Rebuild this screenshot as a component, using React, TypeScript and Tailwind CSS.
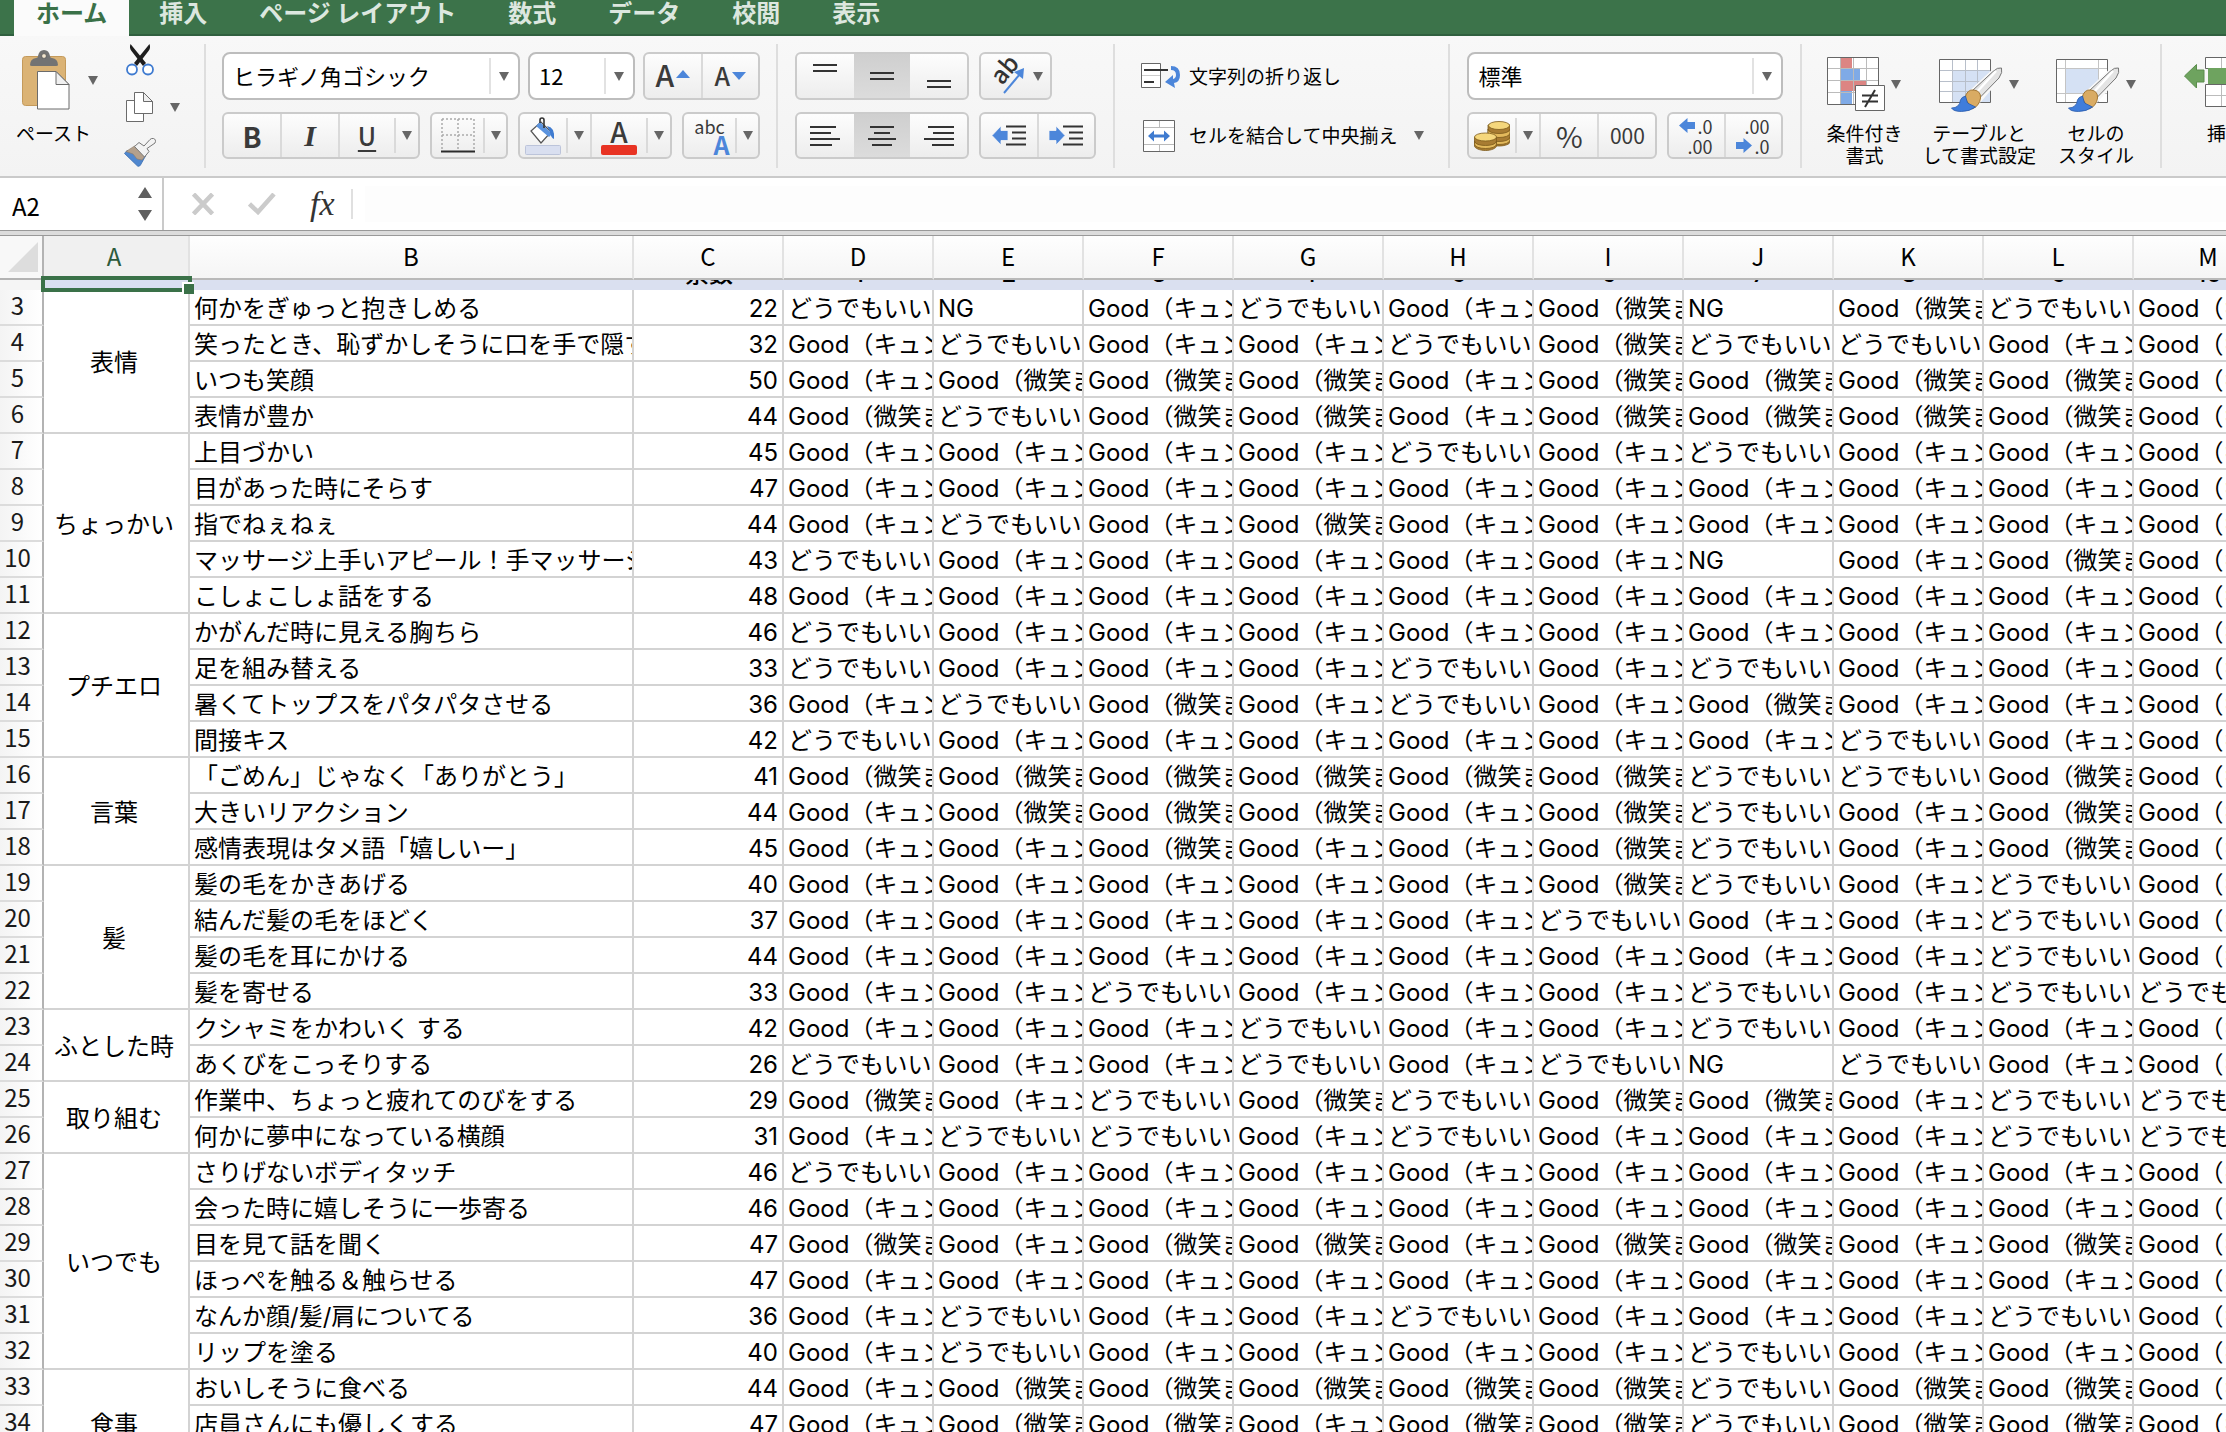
import { useState, type ReactNode } from "react";
import clsx from "clsx";

const TABS = ["ホーム", "挿入", "ページ レイアウト", "数式", "データ", "校閲", "表示"];

const COLUMNS = ["A", "B", "C", "D", "E", "F", "G", "H", "I", "J", "K", "L", "M"];

const ANSWERS: Record<string, string> = {
  K: "Good（キュン",
  B: "Good（微笑ま",
  D: "どうでもいい",
  N: "NG",
};

interface Item {
  label: string;
  votes: number;
  // one letter per answer column, D to M
  answers: string;
}

interface Category {
  name: string;
  items: Item[];
}

const CATEGORIES: Category[] = [
  {
    name: "表情",
    items: [
      { label: "何かをぎゅっと抱きしめる", votes: 22, answers: "DNKDKBNBDK" },
      { label: "笑ったとき、恥ずかしそうに口を手で隠す", votes: 32, answers: "KDKKDBDDKK" },
      { label: "いつも笑顔", votes: 50, answers: "KBBBKBBBBK" },
      { label: "表情が豊か", votes: 44, answers: "BDBBKBBBBK" },
    ],
  },
  {
    name: "ちょっかい",
    items: [
      { label: "上目づかい", votes: 45, answers: "KKKKDKDKKK" },
      { label: "目があった時にそらす", votes: 47, answers: "KKKKKKKKKK" },
      { label: "指でねぇねぇ", votes: 44, answers: "KDKBKKKKKK" },
      { label: "マッサージ上手いアピール！手マッサージ", votes: 43, answers: "DKKKKKNKBK" },
      { label: "こしょこしょ話をする", votes: 48, answers: "KKKKKKKKKK" },
    ],
  },
  {
    name: "プチエロ",
    items: [
      { label: "かがんだ時に見える胸ちら", votes: 46, answers: "DKKKKKKKKK" },
      { label: "足を組み替える", votes: 33, answers: "DKKKDKDKKK" },
      { label: "暑くてトップスをパタパタさせる", votes: 36, answers: "KDBKDKBKKK" },
      { label: "間接キス", votes: 42, answers: "DKKKKKKDKK" },
    ],
  },
  {
    name: "言葉",
    items: [
      { label: "「ごめん」じゃなく「ありがとう」", votes: 41, answers: "BBBBBBDDBK" },
      { label: "大きいリアクション", votes: 44, answers: "KBBBKBDKBK" },
      { label: "感情表現はタメ語「嬉しいー」", votes: 45, answers: "KKBKKBDKBK" },
    ],
  },
  {
    name: "髪",
    items: [
      { label: "髪の毛をかきあげる", votes: 40, answers: "KKKKKBDKDK" },
      { label: "結んだ髪の毛をほどく", votes: 37, answers: "KKKKKDKKDK" },
      { label: "髪の毛を耳にかける", votes: 44, answers: "KKKKKKKKDK" },
      { label: "髪を寄せる", votes: 33, answers: "KKDKKKDKDD" },
    ],
  },
  {
    name: "ふとした時",
    items: [
      { label: "クシャミをかわいく する", votes: 42, answers: "KKKDKKDKKK" },
      { label: "あくびをこっそりする", votes: 26, answers: "DKKDKDNDKK" },
    ],
  },
  {
    name: "取り組む",
    items: [
      { label: "作業中、ちょっと疲れてのびをする", votes: 29, answers: "BKDBDBBKDD" },
      { label: "何かに夢中になっている横顔", votes: 31, answers: "KDDKDKKKDD" },
    ],
  },
  {
    name: "いつでも",
    items: [
      { label: "さりげないボディタッチ", votes: 46, answers: "DKKKKKKKKK" },
      { label: "会った時に嬉しそうに一歩寄る", votes: 46, answers: "KKKKKKKKKK" },
      { label: "目を見て話を聞く", votes: 47, answers: "BKBBKBBKBK" },
      { label: "ほっぺを触る＆触らせる", votes: 47, answers: "KKKKKKKKKK" },
      { label: "なんか顔/髪/肩についてる", votes: 36, answers: "KDKKDKKKDK" },
      { label: "リップを塗る", votes: 40, answers: "KDKKKKDKKK" },
    ],
  },
  {
    name: "食事",
    items: [
      { label: "おいしそうに食べる", votes: 44, answers: "KBBBBBDBBK" },
      { label: "店員さんにも優しくする", votes: 47, answers: "KBBKBBDBBK" },
    ],
  },
];

function Caret({ className }: { className?: string }) {
  return (
    <svg className={clsx("w-[10px] h-[9px] shrink-0", className)} viewBox="0 0 10 9" fill="#666">
      <path d="M0 0h10L5 9z" />
    </svg>
  );
}

function PasteIcon() {
  return (
    <svg className="w-12 h-[60px]" viewBox="0 0 48 60">
      <rect x="0.5" y="6.5" width="43" height="49" rx="3" fill="#dbb375" stroke="#c49a5b" />
      <path d="M8 15q0-6 6-7q2 0 2-2q1-6 6-6t6 6q0 2 2 2q6 1 6 7q0 1-2 1H10q-2 0-2-1z" fill="#737373" />
      <circle cx="22" cy="6" r="2.4" fill="#f3e6cf" stroke="#555" strokeWidth="0.8" />
      <path d="M15.500 21.500H34l13 13v24.500H15.500z" fill="#fff" stroke="#6b6b6b" />
      <path d="M34 21.500v13h13z" fill="#f0f0f0" stroke="#6b6b6b" />
    </svg>
  );
}

function ScissorsIcon() {
  return (
    <svg className="w-7 h-8" viewBox="0 0 28 32">
      <path d="M4.500 0q-1.500 4 1 7l11.500 15 3-3z" fill="#1e1e1e" />
      <path d="M23.500 0q1.500 4-1 7L11 22l-3-3z" fill="#1e1e1e" />
      <circle cx="6" cy="25.500" r="5" fill="#fff" stroke="#3f7bd0" strokeWidth="1.800" />
      <circle cx="22" cy="25.500" r="5" fill="#fff" stroke="#3f7bd0" strokeWidth="1.800" />
    </svg>
  );
}

function CopyIcon() {
  return (
    <svg className="w-7 h-[30px]" viewBox="0 0 28 30" fill="#fff" stroke="#6b6b6b">
      <path d="M0.500 8.500h17v21h-17z" />
      <path d="M8.500 0.500h9l9 9v12h-18z" />
      <path d="M17.500 0.500v9h9z" fill="#efefef" />
    </svg>
  );
}

function FormatBrushIcon() {
  return (
    <svg className="w-8 h-[29px]" viewBox="0 0 32 29">
      <g strokeLinejoin="round">
        <path d="M3 12.500L0.500 15.500l13 12.500q2 1 3-1l5-9z" fill="#4f87cf" stroke="#3a6db0" strokeWidth="0.800" />
        <path d="M10.500 8L2 13.500l7 2.500 4 5 5 1 4-5z" fill="#b3a08c" stroke="#8b7b6a" strokeWidth="0.600" />
        <path d="M15 4.500L10.500 8.500l10 10.500 4.500-5.500-2-3 8-5.500Q32.500 1.500 29.500 0.500q-2-0.500-3.500 1L20 8z" fill="#f3f3f3" stroke="#777" />
      </g>
    </svg>
  );
}

function BordersIcon() {
  return (
    <svg className="w-[34px] h-[35px]" viewBox="0 0 34 35" fill="none">
      <path d="M1 1h32M1 17h32M1 1v30M17 1v30M33 1v30" stroke="#aaa" strokeWidth="1.500" strokeDasharray="2 2" />
      <path d="M0 33.500h34" stroke="#2b2b2b" strokeWidth="2" />
    </svg>
  );
}

function FillIcon() {
  return (
    <svg className="w-9 h-[38px]" viewBox="0 0 36 38" fill="none">
      <path d="M6 14L16 5l10 10-10 11z" fill="#fff" stroke="#555" strokeWidth="1.200" />
      <path d="M11 9l13 11 3-3L15 5z" fill="#5b93de" />
      <path d="M22 9q8 1 7 13q-3-1-4-7z" fill="#3f7bd0" />
      <path d="M19 11V3q0-2-2-2t-2 2v3" stroke="#333" strokeWidth="1.600" />
      <rect x="0.500" y="28.500" width="35" height="9" rx="1" fill="#d9dff0" stroke="#bcc4da" />
    </svg>
  );
}

function WrapIcon() {
  return (
    <svg className="w-10 h-[26px]" viewBox="0 0 40 26" fill="none">
      <path d="M0.500 0.500h19v24h-19z" fill="#fff" stroke="#666" />
      <path d="M1 12.500h18" stroke="#ccc" />
      <path d="M3 7h24M3 19h10" stroke="#333" strokeWidth="1.800" />
      <path d="M30 3q9 0 9 9 0 7-6 8l1 5-10-6 8-7 0 4q3-1 3-4 0-5-5-5z" fill="#4c86da" />
    </svg>
  );
}

function MergeIcon() {
  return (
    <svg className="w-8 h-8" viewBox="0 0 32 32" fill="none">
      <path d="M0.500 0.500h31v31h-31z" fill="#fff" stroke="#666" />
      <path d="M1 7.500h30M1 24.500h30M16.500 1v6M16.500 25v6" stroke="#bbb" />
      <path d="M5 16l6-5.500v4h10v-4l6 5.500-6 5.500v-4H11v4z" fill="#3f7bd0" />
    </svg>
  );
}

function CoinsIcon() {
  return (
    <svg className="w-9 h-[30px]" viewBox="0 0 36 30" stroke="#7c5a1c" strokeWidth="0.800">
      <path d="M14 4v17c0 2 5 4 11 4s11-2 11-4V4z" fill="#a87c32" />
      <path d="M14 8c0 6 22 6 22 0v4c0 6-22 6-22 0zM14 16c0 6 22 6 22 0v3c0 6-22 6-22 0z" fill="#e3b95c" />
      <ellipse cx="25" cy="4.500" rx="10.600" ry="4" fill="#f5d77c" />
      <path d="M0.500 16v9c0 2 5 4.500 11 4.500s11-2.500 11-4.500v-9z" fill="#a87c32" />
      <path d="M0.500 20c0 6 22 6 22 0v3c0 6-22 6-22 0z" fill="#e3b95c" />
      <ellipse cx="11.500" cy="16" rx="11" ry="4" fill="#f5d77c" />
    </svg>
  );
}

function BlueArrow({ flip }: { flip?: boolean }) {
  return (
    <svg className={clsx("w-4 h-[15px] shrink-0", flip && "rotate-180")} viewBox="0 0 16 15" fill="#4c86da">
      <path d="M0 7.500L8.500 0v4H16v7H8.500v4z" />
    </svg>
  );
}

function IndentIcon({ increase }: { increase?: boolean }) {
  return (
    <svg className="w-[34px] h-[21px]" viewBox="0 0 34 21">
      <path d="M14 1.500h20M20 7.500h14M20 13.500h14M14 19.500h20" stroke="#333" strokeWidth="2.200" />
      <path
        d={increase ? "M16 10.500L7 1v4.500H0v10h7V20z" : "M0 10.500L9 1v4.500h7v10H9V20z"}
        fill="#4c86da"
        stroke="#f6f6f6"
        strokeWidth="0.800"
      />
    </svg>
  );
}

function Lines({ d }: { d: string }) {
  return (
    <svg className="w-[30px] h-[34px]" viewBox="0 0 30 34" fill="none" stroke="#333" strokeWidth="2.200">
      <path d={d} />
    </svg>
  );
}

// Paint brush that lies over the table and cell style icons
function StyleBrush() {
  return (
    <g strokeLinejoin="round">
      <path d="M62.500 12q-4-1-8.500 3.500L31 37l9 8L60 22q4-6 2.500-10z" fill="#f8f8f8" stroke="#f8f8f8" strokeWidth="4" />
      <path d="M62.500 12q-4-1-8.500 3.500L33 35l7.500 7L60 22q4-6 2.500-10z" fill="#e4e4e4" stroke="#777" />
      <path d="M57 15L37 37" stroke="#fff" strokeWidth="2.500" />
      <path d="M26 42q2-9 9-8t6.500 8q-1 8-8.500 11z" fill="#d9ab63" stroke="#a37734" />
      <path d="M12.500 52q8 0 9-8 1-3 5-4l2 7 8 4q-6 4.500-14 4.500-8 0-10-3.500z" fill="#3f7ddb" stroke="#2a5bab" strokeWidth="0.800" />
    </g>
  );
}

function ConditionalIcon() {
  return (
    <svg className="w-[58px] h-14" viewBox="0 0 58 56">
      <path d="M0.500 1.500h51v47h-51z" fill="#fff" />
      <path d="M14 2h11v10H14zM14 24h25v11H14z" fill="#dc8583" />
      <path d="M14 12h19v12H14zM14 35h11v13H14z" fill="#7faae6" />
      <path d="M1 12.500h50M1 24.500h50M1 36.500h50M13.500 2v46M26.500 2v46M39.500 2v46" stroke="#bbb" fill="none" />
      <path d="M0.500 1.500h51v47h-51z" fill="none" stroke="#666" />
      <path d="M28.500 29.500h29v25h-29z" fill="#fff" stroke="#666" />
      <path d="M35 39.500h16M35 45.500h16M48 34L38 51" stroke="#333" strokeWidth="2" fill="none" />
    </svg>
  );
}

function TableStyleIcon() {
  return (
    <svg className="w-16 h-14" viewBox="0 0 64 56">
      <path d="M0.500 3.500h51v43h-51z" fill="#fff" />
      <path d="M13 14h38v32H13z" fill="#d5e1f4" />
      <path d="M1 14.500h50M1 25.500h50M1 35.500h50M13.500 4v42M26.500 4v42M38.500 4v42" stroke="#b8bfca" fill="none" />
      <path d="M0.500 3.500h51v43h-51z" fill="none" stroke="#666" />
      <StyleBrush />
    </svg>
  );
}

function CellStyleIcon() {
  return (
    <svg className="w-16 h-14" viewBox="0 0 64 56">
      <path d="M0.500 3.500h51v43h-51z" fill="#fff" />
      <path d="M1 12.500h50M1 37.500h50M9.500 4v42M42.500 4v42" stroke="#c4c4c4" fill="none" />
      <path d="M10 13h32v24H10z" fill="#d5e1f4" />
      <path d="M0.500 3.500h51v43h-51z" fill="none" stroke="#666" />
      <StyleBrush />
    </svg>
  );
}

function InsertIcon() {
  return (
    <svg className="w-[84px] h-14" viewBox="0 0 84 56">
      <path d="M21.500 1.500h48v11h-48zM21.500 28.500h48v22h-48z" fill="#fff" stroke="#666" />
      <path d="M22 39.500h47M37.500 2v10M53.500 2v10M37.500 29v21M53.500 29v21" stroke="#bbb" fill="none" />
      <path d="M24 12h46v16H24z" fill="#6ea35f" />
      <path d="M0.500 20L12.500 8.500V14H20v12h-7.500v6z" fill="#6ea35f" stroke="#5b8d4d" />
    </svg>
  );
}

function ButtonGroup({ className, children }: { className?: string; children: ReactNode }) {
  return (
    <div
      className={clsx(
        "flex shrink-0 overflow-hidden rounded-md border-2 border-[#cbcbcb] bg-gradient-to-b from-[#fdfdfd] to-[#ededed]",
        className,
      )}
    >
      {children}
    </div>
  );
}

interface ToolButtonProps {
  label: string;
  className?: string;
  active?: boolean;
  children: ReactNode;
}

function ToolButton({ label, className, active, children }: ToolButtonProps) {
  return (
    <button
      aria-label={label}
      className={clsx(
        "flex h-full items-center justify-center text-[#3a3a3a]",
        active && "bg-gradient-to-b from-[#cfcfcf] to-[#dcdcdc]",
        className,
      )}
    >
      {children}
    </button>
  );
}

function Separator({ short }: { short?: boolean }) {
  return <div className={clsx("w-[2px] shrink-0 bg-[#dadada]", short && "my-1")} />;
}

function Combo({ label, value, className }: { label: string; value: string; className: string }) {
  return (
    <div
      className={clsx(
        "relative flex h-12 shrink-0 items-center rounded-lg border-2 border-[#bdbdbd] bg-white",
        className,
      )}
    >
      <select
        aria-label={label}
        className="h-full w-full appearance-none bg-transparent pb-[2px] pl-[9px] text-[22px] outline-none"
      >
        <option>{value}</option>
      </select>
      <div className="pointer-events-none absolute inset-y-1 right-[9px] flex items-center gap-2">
        <div className="h-full w-[2px] bg-[#e2e2e2]" />
        <Caret />
      </div>
    </div>
  );
}

function StyleButton({ icon, lines, caret = true }: { icon: ReactNode; lines: string[]; caret?: boolean }) {
  return (
    <button className="flex shrink-0 flex-col items-center pt-3">
      <span className="flex items-center gap-[6px]">
        {icon}
        {caret && <Caret />}
      </span>
      <span className="mt-[10px] text-center text-[19px] leading-[22px]">
        {lines.map((line) => (
          <span key={line} className="block whitespace-nowrap">
            {line}
          </span>
        ))}
      </span>
    </button>
  );
}

function Ribbon() {
  const [align, setAlign] = useState("center");
  const groupClass = "flex h-[124px] shrink-0 border-r-2 border-[#dedede]";

  return (
    <div className="flex shrink-0 overflow-hidden border-b-2 border-[#cacaca] bg-gradient-to-b from-[#f8f8f8] to-[#f3f3f3] py-2 text-black">
      {/* Clipboard */}
      <section className={clsx(groupClass, "pr-6 pl-4")}>
        <button className="flex flex-col items-start pt-[6px]">
          <span className="flex items-center gap-[18px] pl-[6px]">
            <PasteIcon />
            <Caret />
          </span>
          <span className="mt-3 text-[19px] leading-[22px]">ペースト</span>
        </button>
        <div className="ml-[26px] flex flex-col items-start gap-4">
          <button aria-label="切り取り" className="flex w-8 justify-center">
            <ScissorsIcon />
          </button>
          <button aria-label="コピー" className="flex items-center gap-[14px]">
            <span className="flex w-8 justify-center">
              <CopyIcon />
            </span>
            <Caret />
          </button>
          <button aria-label="書式のコピー">
            <FormatBrushIcon />
          </button>
        </div>
      </section>

      {/* Font */}
      <section className={clsx(groupClass, "flex-col gap-3 px-4 pt-2")}>
        <div className="flex gap-2">
          <Combo label="フォント" value="ヒラギノ角ゴシック" className="w-[298px]" />
          <Combo label="フォント サイズ" value="12" className="w-[107px]" />
          <ButtonGroup className="h-12 w-[117px]">
            <ToolButton label="フォント サイズの拡大" className="flex-1 gap-[2px] pb-1 text-[30px] font-medium">
              A
              <svg className="h-2 w-[14px]" viewBox="0 0 14 8" fill="#4c86da">
                <path d="M0 8L7 0l7 8z" />
              </svg>
            </ToolButton>
            <Separator />
            <ToolButton label="フォント サイズの縮小" className="flex-1 gap-[2px] text-[25px] font-medium">
              A
              <svg className="h-2 w-[14px]" viewBox="0 0 14 8" fill="#4c86da">
                <path d="M0 0h14L7 8z" />
              </svg>
            </ToolButton>
          </ButtonGroup>
        </div>
        <div className="flex gap-[10px]">
          <ButtonGroup className="h-[47px] w-[198px]">
            <ToolButton label="太字" className="w-14 text-[28px] font-bold">
              B
            </ToolButton>
            <Separator />
            <ToolButton label="斜体" className="w-14 font-['Liberation_Serif',serif] text-[30px] font-bold italic">
              I
            </ToolButton>
            <Separator />
            <ToolButton label="下線" className="w-[54px] text-[25px] font-medium underline underline-offset-4">
              U
            </ToolButton>
            <Separator short />
            <ToolButton label="下線のオプション" className="flex-1">
              <Caret />
            </ToolButton>
          </ButtonGroup>
          <ButtonGroup className="h-[47px] w-[78px]">
            <ToolButton label="罫線" className="w-[51px]">
              <BordersIcon />
            </ToolButton>
            <Separator short />
            <ToolButton label="罫線のオプション" className="flex-1">
              <Caret />
            </ToolButton>
          </ButtonGroup>
          <ButtonGroup className="h-[47px] w-[154px]">
            <ToolButton label="塗りつぶしの色" className="w-[46px]">
              <FillIcon />
            </ToolButton>
            <Separator short />
            <ToolButton label="塗りつぶしのオプション" className="w-[22px]">
              <Caret />
            </ToolButton>
            <Separator />
            <ToolButton label="フォントの色" className="w-[54px] flex-col">
              <span className="text-[28px] leading-7 font-medium">A</span>
              <span className="h-[10px] w-9 rounded-xs bg-[#e83323]" />
            </ToolButton>
            <Separator short />
            <ToolButton label="フォントの色のオプション" className="flex-1">
              <Caret />
            </ToolButton>
          </ButtonGroup>
          <ButtonGroup className="h-[47px] w-[78px]">
            <ToolButton label="ふりがな" className="w-[51px] flex-col">
              <span className="text-[18px] leading-4">abc</span>
              <span className="pl-6 text-[25px] leading-5 font-bold text-[#4c86da]">A</span>
            </ToolButton>
            <Separator short />
            <ToolButton label="ふりがなのオプション" className="flex-1">
              <Caret />
            </ToolButton>
          </ButtonGroup>
        </div>
      </section>

      {/* Alignment */}
      <section className={clsx(groupClass, "flex-col gap-3 px-[17px] pt-2")}>
        <div className="flex gap-[10px]">
          <ButtonGroup className="h-12 w-[174px]">
            <ToolButton label="上揃え" className="flex-1">
              <Lines d="M3 6h24M3 12h24" />
            </ToolButton>
            <ToolButton label="上下中央揃え" className="flex-1" active>
              <Lines d="M3 14h24M3 20h24" />
            </ToolButton>
            <ToolButton label="下揃え" className="flex-1">
              <Lines d="M3 22h24M3 28h24" />
            </ToolButton>
          </ButtonGroup>
          <ButtonGroup className="h-12 w-[73px]">
            <ToolButton label="方向" className="flex-1 gap-2">
              <svg className="h-9 w-9" viewBox="0 0 36 36">
                <text x="0" y="0" transform="translate(13 28) rotate(-50)" fontSize="24" fontWeight="500" fill="#333">
                  ab
                </text>
                <path d="M15 35L31 16" stroke="#4c86da" strokeWidth="2" />
                <path d="M35 10l-1 11-9-7z" fill="#4c86da" />
              </svg>
              <Caret />
            </ToolButton>
          </ButtonGroup>
        </div>
        <div className="flex gap-[10px]">
          <ButtonGroup className="h-[47px] w-[174px]">
            <ToolButton label="左揃え" className="flex-1" active={align === "left"}>
              <Lines d="M0 8h26M0 14h21M0 20h30M0 26h22" />
            </ToolButton>
            <ToolButton label="中央揃え" className="flex-1" active={align === "center"}>
              <Lines d="M3 8h24M7 14h16M1 20h28M5 26h20" />
            </ToolButton>
            <ToolButton label="右揃え" className="flex-1" active={align === "right"}>
              <Lines d="M4 8h26M9 14h21M0 20h30M8 26h22" />
            </ToolButton>
          </ButtonGroup>
          <ButtonGroup className="h-[47px] w-[117px]">
            <ToolButton label="インデントを減らす" className="flex-1">
              <IndentIcon />
            </ToolButton>
            <Separator />
            <ToolButton label="インデントを増やす" className="flex-1">
              <IndentIcon increase />
            </ToolButton>
          </ButtonGroup>
        </div>
      </section>

      {/* Wrap and merge */}
      <section className={clsx(groupClass, "flex-col gap-3 pt-2 pr-6 pl-[26px] text-[19px]")}>
        <button className="flex h-12 items-center gap-2">
          <WrapIcon />
          文字列の折り返し
        </button>
        <button className="flex h-[47px] items-center gap-[14px] pl-[2px]" onClick={() => setAlign("center")}>
          <MergeIcon />
          セルを結合して中央揃え
          <Caret className="ml-[3px]" />
        </button>
      </section>

      {/* Number */}
      <section className={clsx(groupClass, "flex-col gap-3 px-[17px] pt-2")}>
        <Combo label="表示形式" value="標準" className="w-[316px]" />
        <div className="flex gap-[10px]">
          <ButtonGroup className="h-[47px] w-[190px]">
            <ToolButton label="通貨表示形式" className="w-[46px]">
              <CoinsIcon />
            </ToolButton>
            <Separator short />
            <ToolButton label="通貨のオプション" className="w-[22px]">
              <Caret />
            </ToolButton>
            <Separator />
            <ToolButton label="パーセント" className="w-14 text-[29px]">
              %
            </ToolButton>
            <Separator />
            <ToolButton label="桁区切り" className="flex-1 text-[21px]">
              000
            </ToolButton>
          </ButtonGroup>
          <ButtonGroup className="h-[47px] w-[116px] text-[18px] leading-4">
            <ToolButton label="小数点以下の桁数を増やす" className="flex-1 flex-col items-end gap-1 pr-3">
              <span className="flex items-center gap-[2px]">
                <BlueArrow />
                .0
              </span>
              <span>.00</span>
            </ToolButton>
            <Separator />
            <ToolButton label="小数点以下の桁数を減らす" className="flex-1 flex-col items-end gap-1 pr-3">
              <span>.00</span>
              <span className="flex items-center gap-[2px]">
                <BlueArrow flip />
                .0
              </span>
            </ToolButton>
          </ButtonGroup>
        </div>
      </section>

      {/* Styles */}
      <section className={clsx(groupClass, "gap-5 px-6")}>
        <StyleButton icon={<ConditionalIcon />} lines={["条件付き", "書式"]} />
        <StyleButton icon={<TableStyleIcon />} lines={["テーブルと", "して書式設定"]} />
        <StyleButton icon={<CellStyleIcon />} lines={["セルの", "スタイル"]} />
      </section>

      {/* Cells */}
      <section className="flex shrink-0 items-start pl-[22px]">
        <StyleButton icon={<InsertIcon />} lines={["挿入"]} caret={false} />
      </section>
    </div>
  );
}

function FormulaBar() {
  return (
    <div className="flex h-[52px] shrink-0 items-center bg-white">
      <div className="flex h-full w-[164px] items-center border-r-2 border-[#cacaca] pr-[10px] pl-3">
        <input aria-label="名前ボックス" defaultValue="A2" className="w-full min-w-0 flex-1 pt-1 text-[24px] outline-none" />
        <svg className="h-[34px] w-[14px]" viewBox="0 0 14 34" fill="#5f5f5f">
          <path d="M0 11L7 0l7 11zM0 23h14L7 34z" />
        </svg>
      </div>
      <button aria-label="キャンセル" className="ml-7">
        <svg className="h-[22px] w-[22px]" viewBox="0 0 22 22" stroke="#cbcbcb" strokeWidth="4.500" fill="none">
          <path d="M1.500 1l19 20M20.500 1l-19 20" />
        </svg>
      </button>
      <button aria-label="入力" className="ml-[34px]">
        <svg className="h-[22px] w-7" viewBox="0 0 28 22" stroke="#cbcbcb" strokeWidth="4.500" fill="none">
          <path d="M1.500 11l8.500 8L26 1" />
        </svg>
      </button>
      <button
        aria-label="数式の挿入"
        className="ml-[34px] font-['Liberation_Serif',serif] text-[34px] leading-none text-[#333] italic"
      >
        fx
      </button>
      <div className="ml-4 h-[30px] w-[2px] bg-[#e0e0e0]" />
      <input aria-label="数式バー" className="ml-3 h-9 flex-1 bg-[#fdfdfd] outline-none" />
    </div>
  );
}

function HeaderRowCell({ text }: { text: string }) {
  return (
    <td className="bg-[#dae0f0] p-0">
      <div className="flex h-[10px] items-end justify-center overflow-hidden pb-1 leading-6 font-medium">{text}</div>
    </td>
  );
}

function Sheet() {
  const cellClass = "h-9 overflow-hidden border-r-2 border-b-2 border-[#d3d3d3] px-1 pt-1 pb-0 leading-[30px] whitespace-nowrap";
  const rowHeadClass =
    "border-r-2 border-b-2 border-r-[#b3b3b3] border-b-[#dcdcdc] bg-gradient-to-r from-[#f4f4f4] to-white p-0 pr-[7px] pb-1 font-['Noto_Sans_CJK_JP',sans-serif] leading-[30px] font-normal text-[#1a1a1a]";

  let rowNumber = 2;

  return (
    <div className="min-h-0 flex-1 overflow-hidden">
      <table className="w-[2284px] table-fixed border-separate border-spacing-0 text-[24px] leading-[34px] text-black">
        <colgroup>
          <col className="w-11" />
          <col className="w-[146px]" />
          <col className="w-[444px]" />
          {COLUMNS.slice(2).map((column) => (
            <col key={column} className="w-[150px]" />
          ))}
        </colgroup>
        <thead className="font-['Noto_Sans_CJK_JP',sans-serif]">
          <tr>
            <td className="h-11 border-r-2 border-b-2 border-[#b3b3b3] bg-[#f8f8f8] p-0">
              <svg className="ml-2 h-[30px] w-[30px]" viewBox="0 0 30 30" fill="#dddddd">
                <path d="M30 0v30H0z" />
              </svg>
            </td>
            {COLUMNS.map((column) => (
              <th
                key={column}
                className={clsx(
                  "h-11 border-r-2 border-b-2 border-r-[#e2e2e2] border-b-[#b9b9b9] p-0 pb-[2px] font-normal",
                  column === "A" ? "bg-[#f0f0f0] pr-1 text-[#2d5b3c]" : "bg-gradient-to-b from-[#fefefe] to-[#f5f5f5]",
                )}
              >
                {column}
              </th>
            ))}
          </tr>
        </thead>
        <tbody className="font-['Inter','Noto_Sans_CJK_JP',sans-serif]">
          <tr>
            <td className="border-r-2 border-r-[#b3b3b3] bg-[#f5f5f5] p-0" />
            <td className="relative bg-[#dae0f0] p-0">
              {/* Selected cell outline */}
              <div className="absolute -top-1 -right-[2px] -bottom-[2px] -left-[3px] border-4 border-[#3a7148]" />
              <div className="absolute -right-1 -bottom-1 h-3 w-3 border-t-2 border-l-2 border-white bg-[#3a7148]" />
            </td>
            <HeaderRowCell text="" />
            <HeaderRowCell text="票数" />
            {COLUMNS.slice(3).map((column, i) => (
              <HeaderRowCell key={column} text={String(i + 1)} />
            ))}
          </tr>
          {CATEGORIES.map((category, c) =>
            category.items.map((item, i) => {
              rowNumber += 1;
              const isLast = c === CATEGORIES.length - 1;
              return (
                <tr key={item.label}>
                  <th className={rowHeadClass}>{rowNumber}</th>
                  {i === 0 && (
                    <td
                      rowSpan={category.items.length + (isLast ? 1 : 0)}
                      className={clsx(cellClass, "pl-0 text-center align-middle")}
                    >
                      {category.name}
                    </td>
                  )}
                  <td className={cellClass}>{item.label}</td>
                  <td className={clsx(cellClass, "text-right")}>{item.votes}</td>
                  {item.answers.split("").map((answer, k) => (
                    <td key={k} className={cellClass}>
                      {ANSWERS[answer]}
                    </td>
                  ))}
                </tr>
              );
            }),
          )}
          <tr>
            <th className={rowHeadClass} />
            {COLUMNS.slice(1).map((column) => (
              <td key={column} className={cellClass} />
            ))}
          </tr>
        </tbody>
      </table>
    </div>
  );
}

export default function App() {
  const [activeTab, setActiveTab] = useState("ホーム");

  return (
    <div
      lang="ja"
      className="flex h-screen flex-col overflow-hidden bg-white font-['Noto_Sans_CJK_JP','Noto_Sans',sans-serif]"
    >
      <nav className="flex h-9 shrink-0 gap-2 border-b-2 border-[#30603f] bg-[#3c734a] pl-[14px]">
        {TABS.map((tab) => (
          <button
            key={tab}
            onClick={() => setActiveTab(tab)}
            className={clsx(
              "h-9 px-[22px] pb-3 text-[24px] leading-6 font-bold whitespace-nowrap",
              tab === activeTab ? "bg-[#fbfbfb] text-[#3a7148]" : "text-[#dce7df]",
            )}
          >
            {tab}
          </button>
        ))}
      </nav>
      <Ribbon />
      <FormulaBar />
      <div className="h-[6px] shrink-0 border-y border-[#999] bg-[#dcdcdc]" />
      <Sheet />
    </div>
  );
}
